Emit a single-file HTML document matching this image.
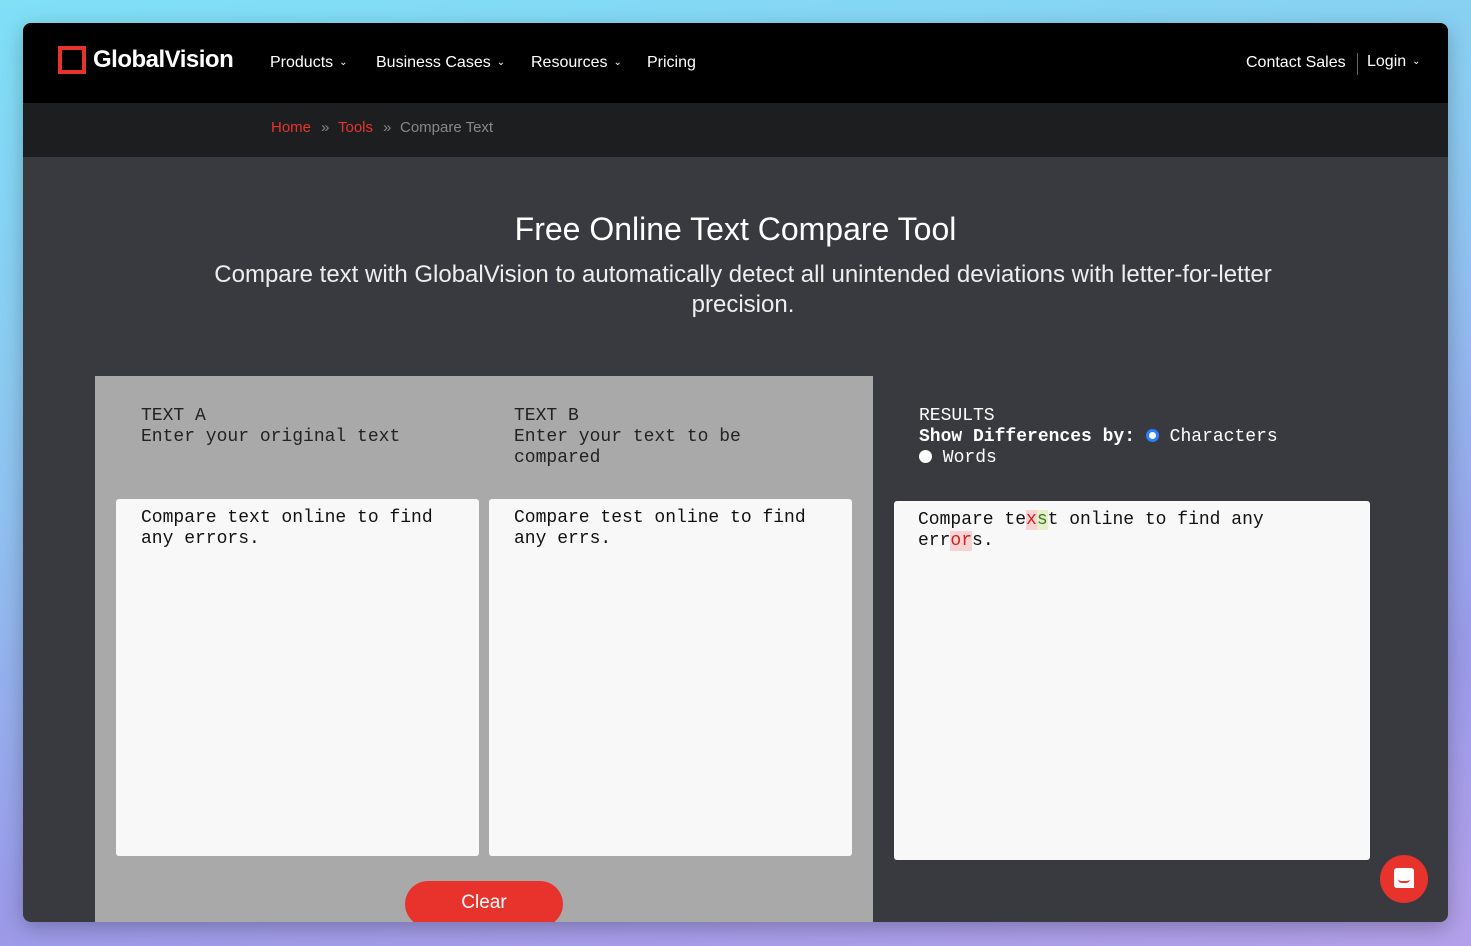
<!DOCTYPE html>
<html><head><meta charset="utf-8"><style>
*{margin:0;padding:0;box-sizing:border-box}
body{width:1471px;height:946px;overflow:hidden;background:linear-gradient(170deg,#7fe0f6 0%,#8fc4f0 40%,#9a9ae8 75%,#b4a0ea 100%);font-family:"Liberation Sans",sans-serif;position:relative}
.win{position:absolute;left:23px;top:23px;width:1425px;height:899px;background:#393a3f;border-radius:8px;overflow:hidden;box-shadow:0 6px 20px rgba(0,0,0,.25)}
.nav{position:absolute;left:0;top:0;width:100%;height:80px;background:#000;color:#fff}
.logo{position:absolute;left:35px;top:23px;width:28px;height:28px;border:4px solid #e8332d}
.brand{position:absolute;left:70px;top:23px;font-size:24px;font-weight:bold;letter-spacing:-0.5px}
.nav .it{position:absolute;top:31px;font-size:16px}
.chev{font-size:10px;margin-left:6px;vertical-align:2px}
.bc{position:absolute;top:80px;left:0;width:100%;height:54px;background:#1d1e20;font-size:15px;color:#888}
.bc span{position:absolute;top:16px}
.h1{position:absolute;top:188px;width:100%;text-align:center;color:#fff;font-size:32px}
.sub{position:absolute;top:237px;left:160px;width:1120px;text-align:center;color:#eee;font-size:24px;line-height:30px}
.mono{font-family:"Liberation Mono",monospace;font-size:18px;line-height:21px}
.gray{position:absolute;left:72px;top:353px;width:778px;height:560px;background:#a9a9a9}
.lab{position:absolute;color:#222}
.ta{position:absolute;background:#f8f8f8;border-radius:3px;padding:9px 25px;color:#111}
.clear{position:absolute;width:158px;height:46px;border-radius:23px;background:#e8332d;color:#fff;font-size:19px;text-align:center;line-height:44px}
.d{background:#f8d3d3;color:#d21f1f}.a{background:#e4efcc;color:#3a7d1a}
.chat{position:absolute;left:1357px;top:832px;width:48px;height:48px;border-radius:50%;background:#e8332d}
</style></head><body>
<div class="win">
 <div class="nav">
  <div class="logo"></div><div class="brand">GlobalVision</div>
  <div class="it" style="left:247px">Products<span class="chev">⌄</span></div>
  <div class="it" style="left:353px">Business Cases<span class="chev">⌄</span></div>
  <div class="it" style="left:508px">Resources<span class="chev">⌄</span></div>
  <div class="it" style="left:624px">Pricing</div>
  <div class="it" style="left:1223px">Contact Sales</div>
  <div style="position:absolute;left:1334px;top:30px;width:1px;height:22px;background:#666"></div>
  <div class="it" style="left:1344px;top:30px">Login<span class="chev">⌄</span></div>
 </div>
 <div class="bc"><span style="left:248px;color:#e8332d">Home</span><span style="left:298px">»</span><span style="left:315px;color:#e8332d">Tools</span><span style="left:360px">»</span><span style="left:377px">Compare Text</span></div>
 <div class="h1">Free Online Text Compare Tool</div>
 <div class="sub">Compare text with GlobalVision to automatically detect all unintended deviations with letter-for-letter precision.</div>
 <div class="gray">
  <div class="lab mono" style="left:46px;top:30px">TEXT A<br>Enter your original text</div>
  <div class="lab mono" style="left:419px;top:30px">TEXT B<br>Enter your text to be<br>compared</div>
  <div class="ta mono" style="left:21px;top:123px;width:363px;height:357px">Compare text online to find any errors.</div>
  <div class="ta mono" style="left:394px;top:123px;width:363px;height:357px">Compare test online to find any errs.</div>
  <div class="clear" style="left:310px;top:505px">Clear</div>
 </div>
 <div class="mono" style="position:absolute;left:896px;top:383px;color:#fff">RESULTS<br><b>Show Differences by:</b> <span style="display:inline-block;width:13px;height:13px;border-radius:50%;border:3px solid #2a7fff;background:#fff;vertical-align:-1px"></span> Characters<br><span style="display:inline-block;width:13px;height:13px;border-radius:50%;background:#fff;vertical-align:-1px"></span> Words</div>
 <div class="ta mono" style="left:871px;top:478px;width:476px;height:359px;padding:9px 24px">Compare te<span class="d">x</span><span class="a">s</span>t online to find any err<span class="d">or</span>s.</div>
 <div class="chat"><div style="position:absolute;left:14px;top:13px;width:20px;height:20px;background:#fff;border-radius:3px 3px 0 3px"></div><div style="position:absolute;left:18px;top:24px;width:12px;height:4px;border-bottom:2px solid #e8332d;border-radius:0 0 6px 6px"></div></div>
</div>
</body></html>
